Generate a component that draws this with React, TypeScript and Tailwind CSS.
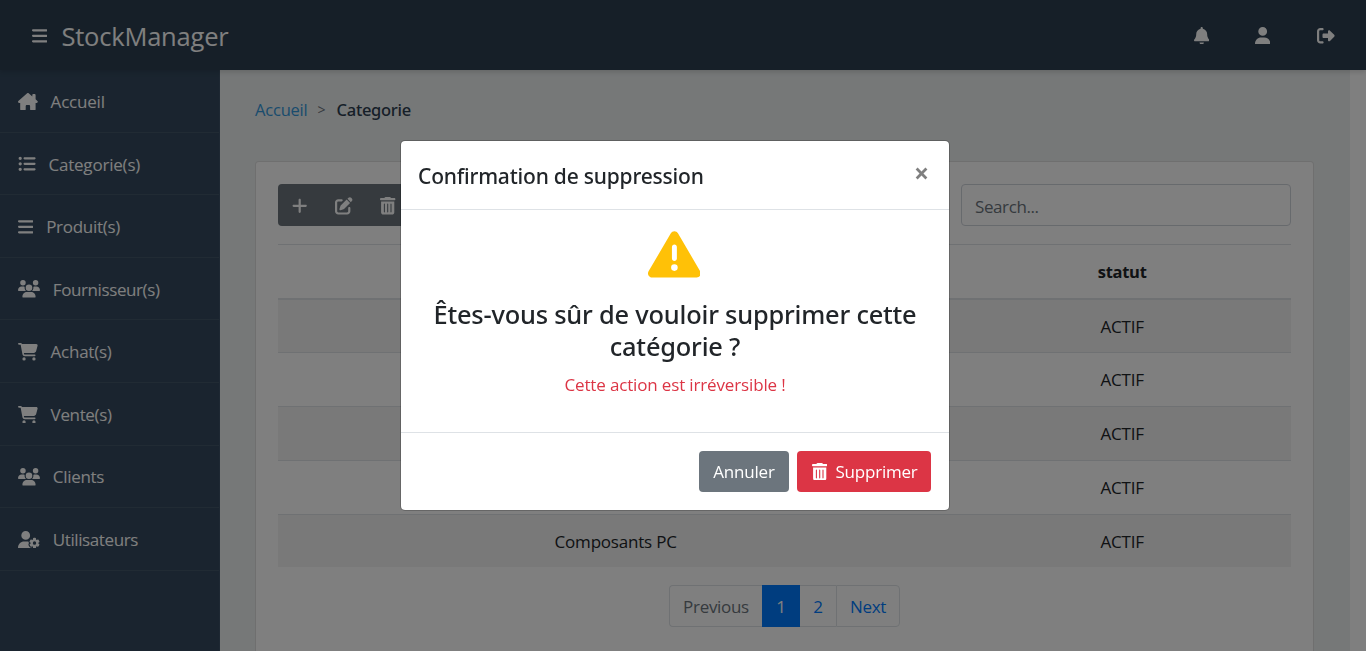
import type { IconType } from "react-icons";
import {
  FaBars,
  FaBell,
  FaCartShopping,
  FaListUl,
  FaPenToSquare,
  FaPlus,
  FaRightFromBracket,
  FaTrashCan,
  FaTriangleExclamation,
  FaUser,
  FaUserGear,
  FaUsers,
} from "react-icons/fa6";

const HouseIcon: IconType = ({ className }) => (
  <svg viewBox="0 0 576 512" fill="currentColor" className={className}>
    <path d="M575.8 255.5c0 18-15 32.1-32 32.1h-32l.7 160.2c0 2.7-.2 5.4-.5 8.1V472c0 22.1-17.9 40-40 40H392c-22.1 0-40-17.9-40-40v-88c0-17.7-14.3-32-32-32h-64c-17.7 0-32 14.3-32 32v88c0 22.1-17.9 40-40 40h-80c-22.1 0-40-17.9-40-40V287.6H32c-18 0-32-14-32-32.1c0-9 3-17 10-24L266.4 8c7-7 15-8 22-8s15 2 21 7L416 100.7V64c0-17.7 14.3-32 32-32h32c17.7 0 32 14.3 32 32v121l52.8 46.4c8 7 12 15 11 24z" />
  </svg>
);

type NavItem = { label: string; Icon: IconType; size: string; text: string };

const NAV: NavItem[] = [
  { label: "Accueil", Icon: HouseIcon, size: "w-[19.8px]", text: "tracking-[-0.2px]" },
  { label: "Categorie(s)", Icon: FaListUl, size: "w-[17.6px]", text: "tracking-[-0.2px]" },
  { label: "Produit(s)", Icon: FaBars, size: "w-[15.4px]", text: "tracking-[-0.3px]" },
  { label: "Fournisseur(s)", Icon: FaUsers, size: "w-[22px]", text: "tracking-[-0.4px]" },
  { label: "Achat(s)", Icon: FaCartShopping, size: "w-[19.8px]", text: "tracking-[-0.25px]" },
  { label: "Vente(s)", Icon: FaCartShopping, size: "w-[19.8px]", text: "tracking-[-0.35px]" },
  { label: "Clients", Icon: FaUsers, size: "w-[22px]", text: "tracking-[-0.3px]" },
  { label: "Utilisateurs", Icon: FaUserGear, size: "w-[22px]", text: "tracking-[-0.4px]" },
];

type Row = { name: string; status: string; style: string };

const ROWS: Row[] = [
  { name: "", status: "ACTIF", style: "h-[52px] bg-[#f2f2f2]" },
  { name: "", status: "ACTIF", style: "h-[54px] border-t" },
  { name: "", status: "ACTIF", style: "h-[54px] border-t bg-[#f2f2f2]" },
  { name: "", status: "ACTIF", style: "h-[54px] border-t" },
  { name: "Composants PC", status: "ACTIF", style: "h-[53px] border-t bg-[#f2f2f2]" },
];

function Header() {
  return (
    <header className="relative z-10 flex h-[70px] items-center justify-between bg-[#2c3e50] pt-px pr-[31px] pl-[32px] text-white shadow-[0_2px_5px_rgba(0,0,0,0.15)]">
      <div className="flex items-center">
        <FaBars className="h-[17.6px] w-[15.4px]" />
        <span className="ml-[14px] text-[25.5px] leading-9 tracking-[-0.2px]">StockManager</span>
      </div>
      <div className="flex items-center">
        <FaBell className="h-[17.6px] w-[15.4px]" />
        <FaUser className="ml-[46px] h-[17.6px] w-[15.4px]" />
        <FaRightFromBracket className="ml-[47px] h-[17.6px] w-[17.6px]" />
      </div>
    </header>
  );
}

function Sidebar() {
  return (
    <nav className="w-[220px] shrink-0 border-r border-[#3d5166] bg-[#34495e] pt-[0.3px] text-white">
      {NAV.map(({ label, Icon, size, text }) => (
        <a key={label} className="flex h-[62.55px] items-center border-b border-[#435669] pt-px pl-[18px]">
          <Icon className={`h-[17.6px] shrink-0 ${size}`} />
          <span className={`ml-[12.8px] pt-px whitespace-nowrap ${text}`}>{label}</span>
        </a>
      ))}
    </nav>
  );
}

function Toolbar() {
  return (
    <div className="flex items-start justify-between">
      <div className="flex h-[42px] w-[132px] items-center rounded-[4px] bg-[#6c757d] pt-[2px] pl-[14px] text-white">
        <FaPlus className="h-[17.6px] w-[15.4px]" />
        <FaPenToSquare className="ml-[27.6px] h-[17.6px] w-[17.6px]" />
        <FaTrashCan className="ml-[27.6px] h-[17.6px] w-[15.4px]" />
      </div>
      <input
        placeholder="Search..."
        className="h-[42px] w-[330px] rounded-[4px] border border-[#ced4da] bg-white px-[13px] pt-[2px] tracking-[-0.4px] placeholder:text-[#6c757d] placeholder:opacity-100"
      />
    </div>
  );
}

function CategoryTable() {
  return (
    <div className="mt-[18px] text-center text-[#212529]">
      <div className="grid h-[56px] grid-cols-[2fr_1fr] items-center border-t border-b-2 border-[#dee2e6] font-bold">
        <span />
        <span className="text-[16.5px] tracking-[-0.3px]">statut</span>
      </div>
      {ROWS.map((row, i) => (
        <div key={i} className={`grid grid-cols-[2fr_1fr] items-center border-[#dee2e6] pt-px ${row.style}`}>
          <span className="tracking-[-0.2px]">{row.name}</span>
          <span className="tracking-[-0.2px]">{row.status}</span>
        </div>
      ))}
    </div>
  );
}

function Pagination() {
  return (
    <div className="mt-[18px] ml-[391px] flex h-[42px] w-[231px] rounded-[4px] text-[#007bff]">
      <span className="flex w-[93px] items-center justify-center rounded-l-[4px] border border-r-0 border-[#dee2e6] pt-[2px] tracking-[-0.3px] text-[#6c757d]">
        Previous
      </span>
      <span className="flex w-[38px] items-center justify-center bg-[#007bff] pt-[2px] text-white">1</span>
      <span className="flex w-[36px] items-center justify-center border-y border-[#dee2e6] pt-[2px]">2</span>
      <span className="flex w-[64px] items-center justify-center rounded-r-[4px] border border-[#dee2e6] pt-[2px] tracking-[-0.3px]">
        Next
      </span>
    </div>
  );
}

function Modal() {
  return (
    <div className="fixed inset-0 z-20 flex items-start justify-center bg-black/50 pt-[140px] pr-[16px]">
      <div className="h-[371px] w-[550px] rounded-[5px] border border-black/20 bg-white bg-clip-padding text-[#212529]">
        <div className="flex h-[69px] items-center justify-between border-b border-[#dee2e6] pr-[20px] pl-[17px]">
          <h5 className="pt-px font-['Noto_Sans','Open_Sans',sans-serif] text-[21px] leading-8 font-medium tracking-[-0.2px]">
            Confirmation de suppression
          </h5>
          <span className="pb-[4px] text-[26.4px] leading-none font-bold text-black/50">×</span>
        </div>
        <div className="flex h-[223px] flex-col items-center border-b border-[#dee2e6] pt-[18px] text-center">
          <FaTriangleExclamation className="mr-[2px] h-[52.8px] w-[52.8px] shrink-0 text-[#ffc107]" />
          <h4 className="mt-[17px] font-['Noto_Sans','Open_Sans',sans-serif] text-[25.4px] leading-[32px] font-medium tracking-[-0.2px] whitespace-nowrap">
            Êtes-vous sûr de vouloir supprimer cette
            <br />
            catégorie ?
          </h4>
          <p className="mt-[10px] leading-[26px] tracking-[-0.15px] text-[#dc3545]">Cette action est irréversible !</p>
        </div>
        <div className="flex h-[77px] items-center justify-end gap-[8px] pr-[18px] text-white">
          <button className="flex h-[41px] w-[90px] items-center justify-center rounded-[4px] bg-[#6c757d] pt-px tracking-[-0.2px]">
            Annuler
          </button>
          <button className="flex h-[41px] w-[134px] items-center rounded-[4px] bg-[#dc3545] pl-[15px]">
            <FaTrashCan className="h-[17.6px] w-[15.4px]" />
            <span className="ml-[8px] pt-px tracking-[-0.2px]">Supprimer</span>
          </button>
        </div>
      </div>
    </div>
  );
}

export default function App() {
  return (
    <div className="flex h-[651px] w-[1366px] flex-col overflow-hidden bg-white font-['Open_Sans',sans-serif] text-[17px] leading-[26px]">
      <Header />
      <div className="flex min-h-0 flex-1">
        <Sidebar />
        <main className="w-[1130px] shrink-0 bg-[#ecf0f1] pt-[27px] pl-[35px]">
          <div className="flex h-[26px] items-center text-[16.5px]">
            <span className="tracking-[-0.2px] text-[#3498db]">Accueil</span>
            <span className="ml-[10px] text-[14px] text-[#6c757d]">&gt;</span>
            <span className="ml-[11px] font-['Noto_Sans','Open_Sans',sans-serif] font-medium tracking-[-0.3px] text-[#2c3e50]">
              Categorie
            </span>
          </div>
          <section className="mt-[38px] h-[520px] w-[1059px] rounded-[4px] border border-black/[.125] bg-white px-[22px] pt-[22px]">
            <Toolbar />
            <CategoryTable />
            <Pagination />
          </section>
        </main>
      </div>
      <Modal />
    </div>
  );
}
